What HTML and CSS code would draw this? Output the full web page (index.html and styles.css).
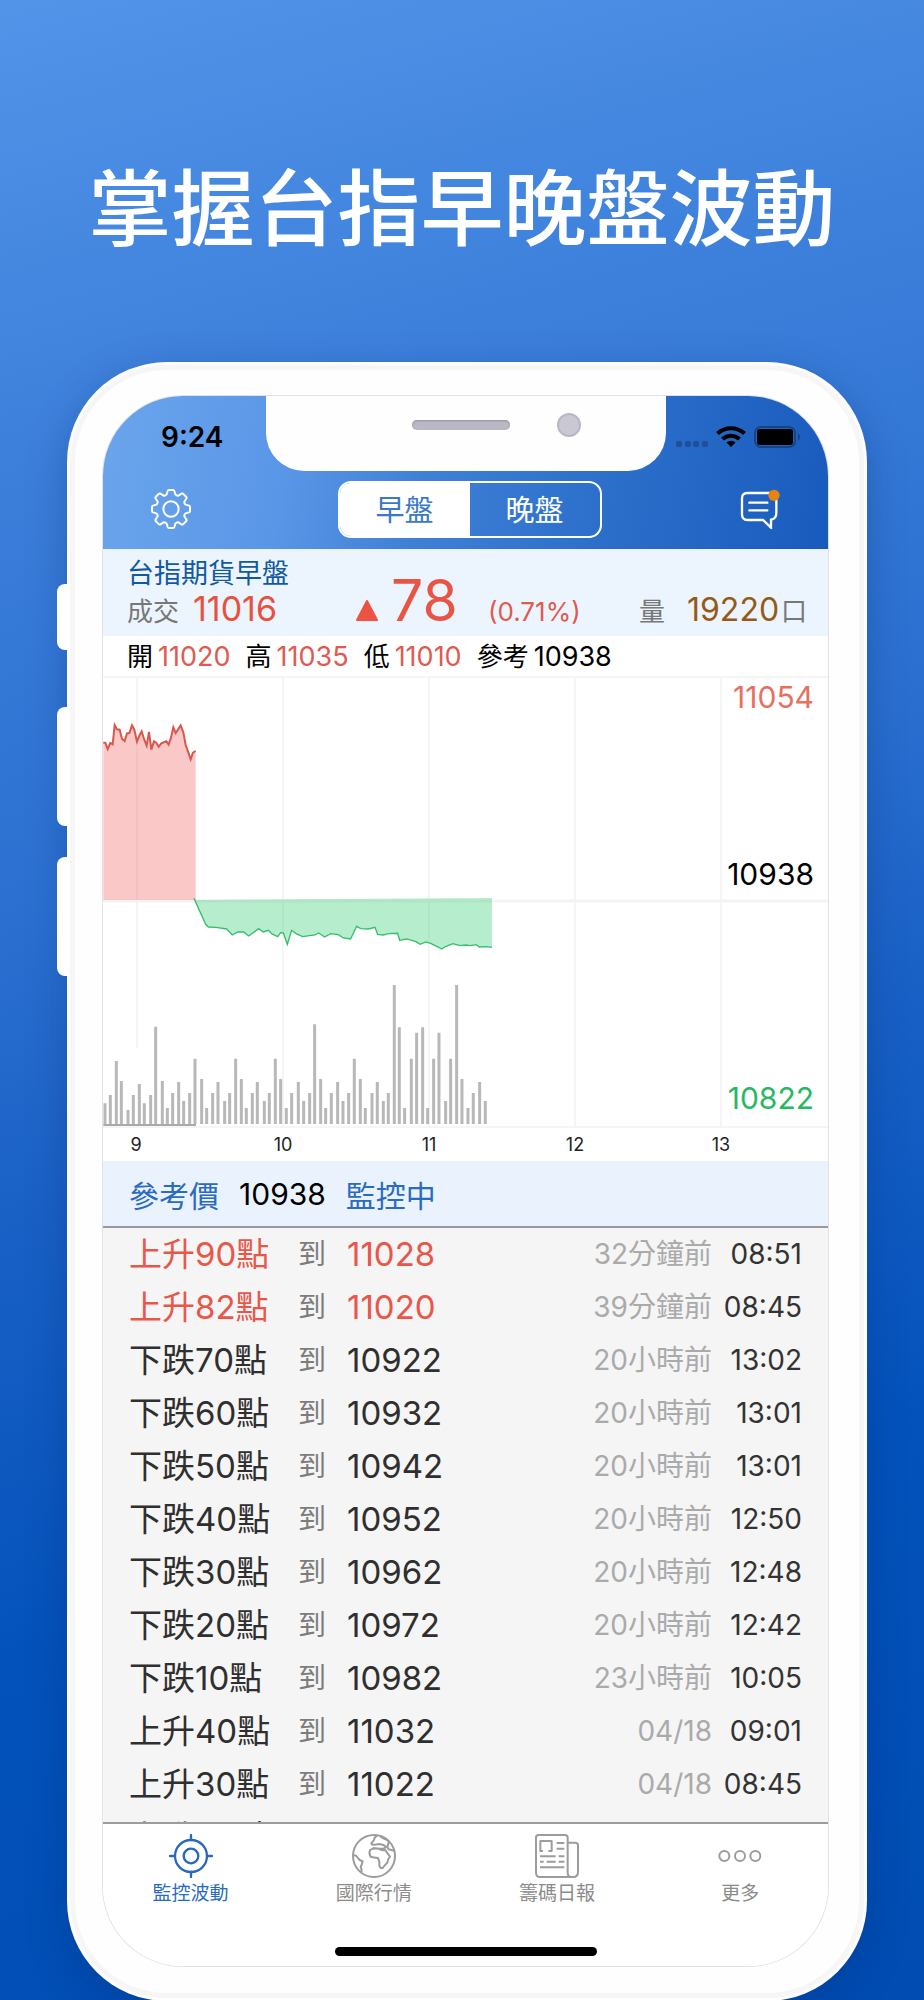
FILE: index.html
```html
<!DOCTYPE html>
<html lang="zh-Hant">
<head>
<meta charset="utf-8">
<meta name="viewport" content="width=device-width, initial-scale=1">
<title>掌握台指早晚盤波動</title>
<link rel="stylesheet" href="styles.css">
</head>
<body>
<main class="page">
  <h1 class="headline">掌握台指早晚盤波動</h1>
  <div class="phone">
    <span class="side-key side-key-mute"></span>
    <span class="side-key side-key-up"></span>
    <span class="side-key side-key-down"></span>
    <div class="screen">
      <header class="top">
        <div class="notch"><span class="speaker"></span><span class="camera"></span></div>
        <div class="status">
          <time class="clock">9:24</time>
          <svg class="status-icons" viewBox="0 0 126 24" aria-hidden="true">
            <g fill="#1f4f98"><rect x="0" y="16" width="6" height="6" rx="2"/><rect x="9" y="16" width="6" height="6" rx="2"/><rect x="17" y="16" width="6" height="6" rx="2"/><rect x="26" y="16" width="6" height="6" rx="2"/></g>
            <g fill="none" stroke="#000" stroke-width="4"><path d="M41.500 8.500a20 20 0 0 1 27 0"/><path d="M46.500 14a12.500 12.500 0 0 1 17 0"/></g>
            <path d="M55 22l-4.500-4.500a6.500 6.500 0 0 1 9 0z"/>
            <rect x="79" y="2" width="40" height="20" rx="6" fill="none" stroke="#174584" stroke-width="2"/>
            <rect x="81" y="4" width="36" height="16" rx="3"/>
            <path d="M122 8.500a4 4 0 0 1 0 7z" fill="#174584"/>
          </svg>
        </div>
        <nav class="nav">
          <button class="icon-button" type="button" aria-label="設定">
            <svg viewBox="-60 -60 120 120"><g fill="none" stroke="#fff" stroke-width="6" stroke-linejoin="round"><path d="M-13-44L-10-54Q-9-57-6-57H6Q9-57 10-54L13-44Q17-39 22-40L33-47L36-46L46-36L47-33L40-22Q39-17 44-13L54-10Q57-9 57-6V6Q57 9 54 10L44 13Q39 17 40 22L47 33L46 36L36 46L33 47L22 40Q17 39 13 44L10 54Q9 57 6 57H-6Q-9 57-10 54L-13 44Q-17 39-22 40L-33 47L-36 46L-46 36L-47 33L-40 22Q-39 17-44 13L-54 10Q-57 9-57 6V-6Q-57-9-54-10L-44-13Q-39-17-40-22L-47-33L-46-36L-36-46L-33-47L-22-40Q-17-39-13-44Z"/><circle r="23"/></g></svg>
          </button>
          <div class="segment" role="group" aria-label="盤別">
            <button class="segment-item segment-item-on" type="button" aria-pressed="true">早盤</button>
            <button class="segment-item" type="button" aria-pressed="false">晚盤</button>
          </div>
          <button class="icon-button" type="button" aria-label="訊息">
            <svg viewBox="0 0 120 120"><path d="M22 12H88Q109 12 109 32V72Q109 90 93 92V116L69 93H22Q6 93 6 76V28Q6 12 22 12ZM28 41H82M28 64H82" fill="none" stroke="#fff" stroke-width="7" stroke-linecap="round"/><circle cx="102" cy="19" r="17" fill="#e9830f"/></svg>
          </button>
        </nav>
      </header>

      <section class="quote">
        <h2 class="quote-name">台指期貨早盤</h2>
        <div class="quote-line">
          <span class="unit">成交</span><span class="price">11016</span>
          <svg class="up" viewBox="0 0 22 22" aria-label="上漲"><path d="M11 2L21 21H1Z" fill="#ee5243" stroke="#ee5243" stroke-width="2" stroke-linejoin="round"/></svg>
          <span class="change">78</span><span class="percent">(0.71%)</span>
          <span class="unit">量</span><span class="volume">19220</span><span class="unit">口</span>
        </div>
      </section>
      <dl class="range">
        <div><dt>開</dt><dd class="rise">11020</dd></div>
        <div><dt>高</dt><dd class="rise">11035</dd></div>
        <div><dt>低</dt><dd class="rise">11010</dd></div>
        <div><dt>參考</dt><dd>10938</dd></div>
      </dl>

      <svg class="chart" viewBox="0 0 725 485" role="img" aria-label="走勢圖">
        <g stroke="#f5f5f6" stroke-width="2"><path d="M0 1H725M34 0V372M180 0V451M326 0V451M472 0V451M618 0V451M0 451H725"/><path d="M0 225H725" stroke="#f3f3f4" stroke-width="3"/></g>
        <g transform="translate(-13 4) scale(.3333)">
          <path d="M40 188L46 188L53 207L61 189L68 193L74 135L81 148L89 149L96 177L104 183L111 160L118 159L126 136L133 149L141 185L148 167L155 154L162 177L170 197L177 156L184 209L192 184L199 188L206 200L214 190L229 184L236 194L243 173L250 142L257 159L272 136L280 157L287 195L295 217L302 238L309 218L317 213V660H40Z" fill="#ef5350" fill-opacity=".32"/>
          <path d="M40 188L46 188L53 207L61 189L68 193L74 135L81 148L89 149L96 177L104 183L111 160L118 159L126 136L133 149L141 185L148 167L155 154L162 177L170 197L177 156L184 209L192 184L199 188L206 200L214 190L229 184L236 194L243 173L250 142L257 159L272 136L280 157L287 195L295 217L302 238L309 218L317 213" fill="none" stroke="#d9584d" stroke-width="6"/>
          <path d="M312 660L1206 654V802L1190 800L1168 801L1159 794L1140 797L1128 795L1110 797L1089 791L1068 799L1055 807L1042 800L1022 790L1007 786L991 793L978 785L950 777L929 781L923 760L895 761L880 765L863 763L855 742L835 747L812 746L800 739L782 777L760 774L745 764L722 761L704 771L686 759L675 765L638 770L617 760L605 751L592 793L580 759L572 758L563 770L546 762L535 751L520 756L506 746L476 768L461 756L443 756L427 765L410 747L378 742L355 741L347 733Z" fill="#12c45a" fill-opacity=".31"/>
          <path d="M312 655L347 733L355 741L378 742L410 747L427 765L443 756L461 756L476 768L506 746L520 756L535 751L546 762L563 770L572 758L580 759L592 793L605 751L617 760L638 770L675 765L686 759L704 771L722 761L745 764L760 774L782 777L800 739L812 746L835 747L855 742L863 763L880 765L895 761L923 760L929 781L950 777L978 785L991 793L1007 786L1022 790L1042 800L1055 807L1068 799L1089 791L1110 797L1128 795L1140 797L1159 794L1168 801L1190 800L1206 802" fill="none" stroke="#35bf6c" stroke-width="4"/>
        </g>
        <g transform="translate(-13 284) scale(.3333)" fill="none">
          <path stroke="#b8b8b8" stroke-width="9" d="M45 492V430M61 492V405M79 492V303M94 492V363M114 492V450M130 492V405M148 492V372M163 492V430M182 492V405M197 492V200M217 492V363M232 492V444M248 492V399M266 492V366M281 492V423M299 492V399M315 492V296M335 492V357M350 492V444M368 492V399M384 492V366M404 492V423M419 492V399M437 492V296M454 492V357M469 492V444M487 492V399M502 492V366M523 492V423M538 492V399M556 492V296M572 492V357M589 492V444M605 492V399M625 492V366M641 492V423M659 492V399M674 492V193M692 492V357M707 492V444M724 492V399M743 492V366M759 492V423M776 492V399M793 492V296M811 492V357M826 492V444M846 492V399M862 492V366M880 492V423M895 492V399M913 492V75M928 492V202M944 492V444M964 492V296M980 492V218M998 492V202M1013 492V444M1031 492V296M1047 492V218M1067 492V423M1082 492V296M1100 492V75M1116 492V357M1134 492V444M1150 492V399M1169 492V366M1186 492V423"/>
          <path d="M40 495H318" stroke="#8d8d8d" stroke-width="5"/>
        </g>
        <g class="scale-text"><text x="711" y="32" fill="#e8705f">11054</text><text x="711" y="209">10938</text><text x="711" y="433" fill="#27b862">10822</text></g>
        <g class="axis-text"><text x="33" y="475">9</text><text x="180" y="475">10</text><text x="326" y="475">11</text><text x="472" y="475">12</text><text x="618" y="475">13</text></g>
      </svg>

      <div class="reference"><span>參考價</span><b>10938</b><span>監控中</span></div>

      <div class="log">
        <table>
          <colgroup><col class="col-move"><col class="col-to"><col><col><col class="col-time"></colgroup>
          <tbody>
            <tr class="rise"><td>上升90點</td><td>到</td><td>11028</td><td>32分鐘前</td><td>08:51</td></tr>
            <tr class="rise"><td>上升82點</td><td>到</td><td>11020</td><td>39分鐘前</td><td>08:45</td></tr>
            <tr><td>下跌70點</td><td>到</td><td>10922</td><td>20小時前</td><td>13:02</td></tr>
            <tr><td>下跌60點</td><td>到</td><td>10932</td><td>20小時前</td><td>13:01</td></tr>
            <tr><td>下跌50點</td><td>到</td><td>10942</td><td>20小時前</td><td>13:01</td></tr>
            <tr><td>下跌40點</td><td>到</td><td>10952</td><td>20小時前</td><td>12:50</td></tr>
            <tr><td>下跌30點</td><td>到</td><td>10962</td><td>20小時前</td><td>12:48</td></tr>
            <tr><td>下跌20點</td><td>到</td><td>10972</td><td>20小時前</td><td>12:42</td></tr>
            <tr><td>下跌10點</td><td>到</td><td>10982</td><td>23小時前</td><td>10:05</td></tr>
            <tr><td>上升40點</td><td>到</td><td>11032</td><td>04/18</td><td>09:01</td></tr>
            <tr><td>上升30點</td><td>到</td><td>11022</td><td>04/18</td><td>08:45</td></tr>
            <tr><td>上升20點</td><td>到</td><td>11012</td><td>04/18</td><td>08:45</td></tr>
          </tbody>
        </table>
      </div>

      <footer class="bottom">
        <nav class="tabs">
          <a class="tab tab-on" href="#watch"><svg viewBox="0 0 132 132"><circle cx="66" cy="66" r="48"/><circle cx="66" cy="66" r="22"/><path d="M66 3V18M66 114V129M3 66H18M114 66H129"/></svg>監控波動</a>
          <a class="tab" href="#world"><svg viewBox="0 0 132 132"><circle cx="66" cy="66" r="63"/><path d="M76 4Q66 10 66 18L58 28Q60 34 68 32L82 30Q96 32 102 38Q98 46 84 44L62 42M86 8Q98 16 106 18Q114 24 108 32Q104 40 110 46L126 50M54 48Q62 42 80 44Q88 50 100 48Q106 58 114 68Q108 74 106 86Q98 94 92 102Q84 104 82 94Q84 84 78 72Q64 70 56 68Q50 58 54 48ZM4 64Q12 62 18 72Q22 80 32 82Q30 92 26 98Q30 108 28 114"/></svg>國際行情</a>
          <a class="tab" href="#daily"><svg viewBox="0 0 132 132"><path d="M10 3H90Q98 3 98 11V116Q98 129 112 129H16Q3 129 3 116V11Q3 3 10 3ZM98 26H121Q129 26 129 34V114Q129 129 114 129"/><path d="M24 51H16V21H50V51H40M65 27H88M65 44H88M15 67H62M71 67H88M15 83H26M35 83H62M71 83H88M15 100H88"/></svg>籌碼日報</a>
          <a class="tab" href="#more"><svg viewBox="0 0 132 132"><circle cx="19" cy="66" r="15"/><circle cx="66" cy="66" r="15"/><circle cx="112" cy="66" r="15"/></svg>更多</a>
        </nav>
        <span class="home-bar"></span>
      </footer>
    </div>
  </div>
</main>
</body>
</html>
```
FILE: styles.css
```css
* { box-sizing: border-box; }
body { margin: 0; font-family: Inter, "Noto Sans CJK TC", sans-serif; color: #000; }
h1, h2, dl, dd { margin: 0; font-weight: 400; }
button { border: 0; padding: 0; background: none; font: inherit; color: inherit; }
svg { display: block; }

.page { height: 100vh; overflow: hidden; background: linear-gradient(165deg, #5294e8 0%, #3b7eda 22%, #2a6fd0 42%, #1a61c6 54%, #0352bb 74%, #004cb2 100%); }
.headline { padding-top: 149px; height: 362px; line-height: 120px; font-size: 83px; font-weight: 500; color: #fff; text-align: center; white-space: nowrap; }

.phone { position: relative; margin: 0 57px 0 67px; padding: 34px 39px 35px 36px; border-radius: 100px; background: #fefefe; box-shadow: 0 12px 40px rgba(0, 40, 110, .3); }
.phone::before { content: ""; position: absolute; inset: 3px; border: 5px solid #f6f6f7; border-radius: 97px; }
.side-key { position: absolute; left: -10px; width: 12px; border-radius: 8px 0 0 8px; background: #fefefe; }
.side-key-mute { top: 222px; height: 66px; }
.side-key-up { top: 345px; height: 119px; }
.side-key-down { top: 495px; height: 119px; }
.screen { position: relative; overflow: hidden; border-radius: 80px; background: #fff; box-shadow: 0 0 0 1px #e2e2e5; }

.top { position: relative; height: 153px; background: linear-gradient(100deg, #6aa5ec 0%, #5a96e7 26%, #4080d7 44%, #2c70cb 68%, #195bbd 100%); }
.notch { position: absolute; top: 0; left: 50%; width: 400px; height: 75px; margin-left: -200px; border-radius: 0 0 38px 38px; background: #fefefe; }
.speaker { position: absolute; top: 24px; left: 146px; width: 98px; height: 10px; border-radius: 5px; background: #b9b8c5; box-shadow: inset 0 1px 2px #93939e; }
.camera { position: absolute; top: 17px; left: 291px; width: 24px; height: 24px; border-radius: 50%; background: #c9c8d3; border: 2px solid #b9b8c2; }
.status { display: flex; justify-content: space-between; height: 75px; padding: 29px 26px 0 58px; }
.clock { font-size: 28px; font-weight: 600; line-height: 24px; }
.status-icons { width: 126px; height: 24px; }
.nav { display: flex; align-items: center; justify-content: space-between; height: 76px; padding: 0 48px; }
.icon-button { width: 40px; height: 40px; }
.segment { display: flex; width: 264px; height: 57px; margin-left: 8px; border: 2px solid #fff; border-radius: 13px; overflow: hidden; }
.segment-item { flex: 1; padding-bottom: 3px; font-size: 29px; color: #fff; }
.segment-item-on { background: #fff; color: #3a78c8; }

.quote { height: 87px; padding: 8px 22px 0 24px; background: #ecf5fe; }
.quote-name { font-size: 27px; line-height: 34px; color: #13599f; }
.quote-line { display: grid; grid-template-columns: 66fr 163fr 35fr 97fr 151fr 48fr 94fr 25fr; align-items: baseline; line-height: 20px; white-space: nowrap; }
.quote-line > * { min-width: 0; }
.unit { font-size: 26px; color: #777; }
.price { font-size: 34px; color: #e8513f; }
.up { width: 22px; height: 22px; }
.change { font-size: 57px; color: #e95545; }
.percent { font-size: 26px; color: #e15a50; }
.volume { font-size: 32px; color: #955a16; }

.range { display: flex; gap: 15px; height: 40px; padding-left: 24px; line-height: 42px; }
.range div { display: flex; align-items: baseline; gap: 5px; }
.range dt { font-size: 26px; }
.range dd { font-size: 27px; }
.range .rise { color: #e15a50; }

.chart { width: 100%; height: auto; }
.scale-text { font-size: 30px; text-anchor: end; }
.axis-text { font-size: 18px; text-anchor: middle; fill: #222; }

.reference { display: flex; align-items: center; gap: 20px; height: 67px; padding-left: 26px; border-bottom: 2px solid #98999c; background: #eaf2fe; font-size: 30px; color: #2a6bc2; }
.reference b { font-weight: 400; color: #000; }

.log { height: 594px; overflow: hidden; background: #f5f5f5; }
.log table { width: 100%; table-layout: fixed; border-collapse: collapse; white-space: nowrap; color: #2f2f2f; }
.log tr { height: 53px; }
.log td { padding: 0; font-size: 33px; line-height: 53px; }
.log td:first-child { padding-left: 26px; }
.log td:nth-child(2) { font-size: 28px; color: #7c7c7c; }
.log td:nth-child(4) { font-size: 28px; color: #aaa; text-align: right; }
.log td:last-child { padding-right: 26px; font-size: 28px; text-align: right; color: #333; }
.log .rise { color: #e8574a; }
.col-move { width: 195px; }
.col-to { width: 49px; }
.col-time { width: 116px; }

.bottom { height: 144px; border-top: 2px solid #9c9c9c; background: #fff; }
.tabs { display: flex; margin: 0 -4px; padding-top: 10px; }
.tab { flex: 1; display: flex; flex-direction: column; align-items: center; gap: 2px; font-size: 19px; line-height: 28px; color: #8b8b8b; text-decoration: none; }
.tab svg { width: 44px; height: 44px; fill: none; stroke: #9c9c9c; stroke-width: 6; stroke-linejoin: round; }
.tab-on { color: #2a6bc2; }
.tab-on svg { stroke: #2a68bf; stroke-width: 7; stroke-linecap: round; }
.home-bar { display: block; width: 262px; height: 9px; margin: 39px auto 0; border-radius: 5px; background: #000; }
```
